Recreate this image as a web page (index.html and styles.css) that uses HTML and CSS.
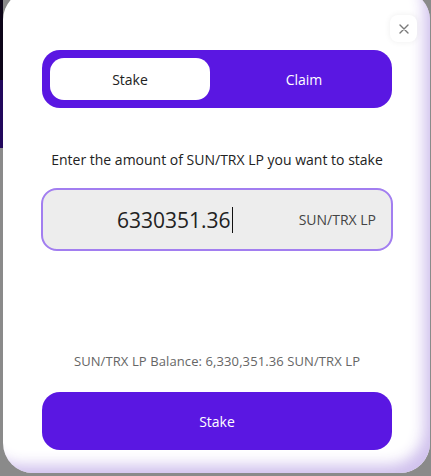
FILE: index.html
```html
<!DOCTYPE html>
<html>
<head>
<meta charset="utf-8">
<link rel="stylesheet" href="styles.css">
</head>
<body>
<div class="modal">
  <button class="close" aria-label="Close">
    <svg width="10" height="10" viewBox="0 0 10 10"><path d="M1 1L9 9M9 1L1 9" stroke="#7a7a7a" stroke-width="1.4" stroke-linecap="round"/></svg>
  </button>
  <div class="tabs">
    <div class="tab active">Stake</div>
    <div class="tab">Claim</div>
  </div>
  <p class="hint">Enter the amount of SUN/TRX LP you want to stake</p>
  <div class="field">
    <div class="value">6330351.36<span class="caret"></span></div>
    <div class="unit">SUN/TRX LP</div>
  </div>
  <p class="balance">SUN/TRX LP Balance: 6,330,351.36 SUN/TRX LP</p>
  <button class="submit">Stake</button>
</div>
</body>
</html>
```
FILE: styles.css
```css
html, body {
  margin: 0;
  height: 476px;
  overflow: hidden;
}
body {
  background-color: #8a8a8a;
  background-image: linear-gradient(#0d0518 0 80px, #22085c 80px 148px, transparent 148px);
  background-size: 3px 100%;
  background-repeat: no-repeat;
  font-family: "Open Sans", "Noto Sans", sans-serif;
}
.modal {
  position: relative;
  box-sizing: border-box;
  margin: -10px 0 0 3px;
  width: 427px;
  height: 483px;
  border-radius: 30px;
  background: #fff;
  box-shadow: inset -12px -14px 14px -6px rgba(205, 190, 236, 0.95);
  padding: 60px 38px 0 39px;
  display: flex;
  flex-direction: column;
}
.close {
  position: absolute;
  top: 25px;
  right: 13px;
  width: 27px;
  height: 27px;
  border: none;
  border-radius: 8px;
  background: #fff;
  box-shadow: 0 0 6px rgba(0, 0, 0, 0.07);
  display: flex;
  align-items: center;
  justify-content: center;
  padding: 0;
}
.tabs {
  box-sizing: border-box;
  height: 58px;
  border-radius: 18px;
  background: #5a17e2;
  padding: 8px;
  display: flex;
  justify-content: space-between;
}
.tab {
  width: 160px;
  display: flex;
  align-items: center;
  justify-content: center;
  font-size: 14px;
  color: #fff;
  border-radius: 14px;
}
.tab.active {
  background: #fff;
  color: #222;
}
.hint {
  margin: 42px 0 0;
  text-align: center;
  font-size: 14px;
  line-height: 20px;
  color: #222;
  letter-spacing: 0;
}
.field {
  box-sizing: border-box;
  margin: 18px -1px 0 -1px;
  height: 63px;
  border: 2px solid #a27ef0;
  border-radius: 16px;
  background: #ededed;
  display: flex;
  align-items: center;
  padding: 0 15px 0 74px;
}
.value {
  flex: 1;
  font-size: 21px;
  color: #222;
  display: flex;
  align-items: center;
}
.caret {
  display: inline-block;
  width: 1px;
  height: 26px;
  background: #111;
  margin-left: 1px;
}
.unit {
  font-size: 14px;
  color: #444;
}
.balance {
  margin: 100px 0 0;
  text-align: center;
  font-size: 13px;
  line-height: 20px;
  color: #666;
  letter-spacing: 0.1px;
}
.submit {
  margin-top: 21px;
  height: 58px;
  border: none;
  border-radius: 18px;
  background: #5a17e2;
  color: #fff;
  font-family: inherit;
  font-size: 14px;
}
```
